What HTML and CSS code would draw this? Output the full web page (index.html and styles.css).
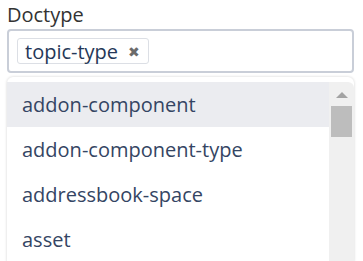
FILE: index.html
```html
<!DOCTYPE html>
<html lang="en">
<head>
    <meta charset="UTF-8">
    <title>Doctype</title>
    <link rel="stylesheet" href="styles.css">
</head>
<body>
    <div class="field">
        <label class="field-label">Doctype</label>
        <div class="select-box">
            <span class="tag">topic-type <span class="tag-remove">&#10006;</span></span>
        </div>

        <!-- Options menu -->
        <div class="menu">
            <ul class="options">
                <li class="option active">addon-component</li>
                <li class="option">addon-component-type</li>
                <li class="option">addressbook-space</li>
                <li class="option">asset</li>
            </ul>
            <div class="scrollbar">
                <div class="scroll-arrow"></div>
                <div class="scroll-thumb"></div>
            </div>
        </div>
    </div>
</body>
</html>
```

FILE: styles.css
```css
body {
    margin: 0;
    font-family: 'Open Sans', 'Noto Sans', Arial, sans-serif;
    background: #fff;
    overflow: hidden;
}

.field {
    padding: 2px 9px 0 7px;
}

.field-label {
    display: block;
    font-size: 20px;
    color: #333;
    line-height: 25px;
}

.select-box {
    margin-top: 2px;
    height: 40px;
    border: 2px solid #c9ced8;
    border-radius: 4px;
    display: flex;
    align-items: center;
    padding: 0 8px;
}

.tag {
    display: inline-flex;
    align-items: center;
    gap: 10px;
    height: 24px;
    padding: 0 8px 0 7px;
    border: 1px solid #dcdfe5;
    border-radius: 3px;
    font-size: 20px;
    color: #253858;
}

.tag-remove {
    font-size: 14px;
    color: #6b6b6b;
}

.menu {
    margin-top: 4px;
    display: flex;
    border-radius: 6px 6px 0 0;
    box-shadow: 0 0 3px rgba(0, 0, 0, 0.18);
    padding-top: 5px;
    background: #fff;
}

.options {
    list-style: none;
    margin: 0;
    padding: 0;
    flex: 1;
}

.option {
    height: 45px;
    line-height: 45px;
    padding-left: 15px;
    font-size: 20px;
    color: #344563;
}

.option.active {
    background: #ebecf0;
}

.scrollbar {
    width: 25px;
    background: #f0f0f0;
    border-radius: 0 6px 0 0;
    display: flex;
    flex-direction: column;
    align-items: center;
}

.scroll-arrow {
    margin-top: 10px;
    width: 0;
    height: 0;
    border-left: 6px solid transparent;
    border-right: 6px solid transparent;
    border-bottom: 6px solid #a3a3a3;
}

.scroll-thumb {
    margin-top: 8px;
    width: 21px;
    height: 31px;
    background: #bdbdbd;
}
```
